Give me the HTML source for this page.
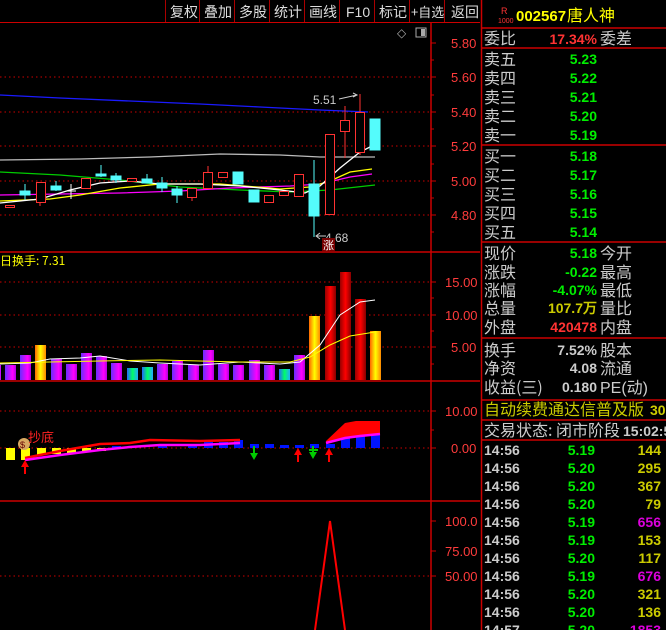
<!DOCTYPE html>
<html><head><meta charset="utf-8"><style>
html,body{margin:0;padding:0;background:#000;width:666px;height:630px;overflow:hidden}
svg{display:block}
.c{font-family:"WenQuanYi Zen Hei","Noto Sans CJK SC",sans-serif}
.n{font-family:"Liberation Sans",sans-serif;font-weight:bold}
</style></head><body>
<svg width="666" height="630" viewBox="0 0 666 630" xmlns="http://www.w3.org/2000/svg">
<defs>
<linearGradient id="pu" x1="0" x2="1"><stop offset="0" stop-color="#6a2cff"/><stop offset=".7" stop-color="#f0f"/><stop offset="1" stop-color="#b000e0"/></linearGradient>
<linearGradient id="rd" x1="0" x2="1"><stop offset="0" stop-color="#900"/><stop offset=".5" stop-color="#f00"/><stop offset="1" stop-color="#800"/></linearGradient>
<linearGradient id="ye" x1="0" x2="1"><stop offset="0" stop-color="#f60"/><stop offset=".5" stop-color="#ff0"/><stop offset="1" stop-color="#f80"/></linearGradient>
<linearGradient id="cy" x1="0" x2="1"><stop offset="0" stop-color="#26f"/><stop offset=".5" stop-color="#0f6"/><stop offset="1" stop-color="#2af"/></linearGradient>
</defs>
<!-- toolbar -->
<g class="c" fill="#ddd" font-size="14">
<text x="170" y="17">复权</text><text x="204" y="17">叠加</text><text x="239" y="17">多股</text><text x="274" y="17">统计</text><text x="309" y="17">画线</text><text x="346" y="17" font-family="Liberation Sans">F10</text><text x="379" y="17">标记</text><text x="411" y="17" font-size="13">+自选</text><text x="451" y="17">返回</text>
</g>
<g stroke="#a00" stroke-width="1">
<line x1="165.5" y1="0" x2="165.5" y2="22"/><line x1="199.5" y1="0" x2="199.5" y2="22"/><line x1="234.5" y1="0" x2="234.5" y2="22"/><line x1="269.5" y1="0" x2="269.5" y2="22"/><line x1="304.5" y1="0" x2="304.5" y2="22"/><line x1="339.5" y1="0" x2="339.5" y2="22"/><line x1="374.5" y1="0" x2="374.5" y2="22"/><line x1="409.5" y1="0" x2="409.5" y2="22"/><line x1="444.5" y1="0" x2="444.5" y2="22"/>
</g>
<line x1="0" y1="22.5" x2="480" y2="22.5" stroke="#c00"/>
<!-- frame -->
<g stroke="#c00" stroke-width="1.5">
<line x1="431" y1="22" x2="431" y2="630"/>
<line x1="0" y1="252" x2="480" y2="252"/>
<line x1="0" y1="381" x2="480" y2="381"/>
<line x1="0" y1="501" x2="480" y2="501"/>
<line x1="481.5" y1="0" x2="481.5" y2="630"/>
</g>
<!-- grids -->
<g stroke="#c00" stroke-dasharray="1.5,3" stroke-width="1">
<line x1="0" y1="77" x2="430" y2="77"/><line x1="0" y1="112" x2="430" y2="112"/><line x1="0" y1="146" x2="430" y2="146"/><line x1="0" y1="181" x2="430" y2="181"/><line x1="0" y1="215" x2="430" y2="215"/>
<line x1="0" y1="282" x2="430" y2="282"/><line x1="0" y1="315" x2="430" y2="315"/><line x1="0" y1="347" x2="430" y2="347"/>
<line x1="0" y1="411" x2="430" y2="411"/><line x1="0" y1="448" x2="430" y2="448"/>
<line x1="0" y1="576" x2="430" y2="576"/>
</g>
<!-- ticks -->
<g stroke="#c00">
<path d="M431 43h5M431 60h3M431 77h5M431 95h3M431 112h5M431 129h3M431 146h5M431 164h3M431 181h5M431 198h3M431 215h5M431 232h3M431 282h5M431 298h3M431 315h5M431 331h3M431 347h5M431 364h3M431 411h5M431 430h3M431 448h5M431 521h5M431 551h5M431 576h5"/>
</g>
<g fill="#ff3c3c" font-size="13" font-family="Liberation Sans">
<text x="451" y="48">5.80</text><text x="451" y="82">5.60</text><text x="451" y="117">5.40</text><text x="451" y="151">5.20</text><text x="451" y="186">5.00</text><text x="451" y="220">4.80</text>
<text x="445" y="287">15.00</text><text x="445" y="320">10.00</text><text x="451" y="352">5.00</text>
<text x="445" y="416">10.00</text><text x="451" y="453">0.00</text>
<text x="445" y="526">100.0</text><text x="445" y="556">75.00</text><text x="445" y="581">50.00</text>
</g>
<text x="397" y="37" fill="#aaa" font-size="12">◇</text>
<rect x="416" y="28" width="10" height="9" fill="none" stroke="#aaa"/><rect x="421" y="29" width="4" height="7" fill="#aaa"/>
<!-- MAs -->
<g fill="none" stroke-width="1.3">
<polyline stroke="#1a1aff" points="0,95 60,98 130,101 200,104 260,107 320,110 368,112"/>
<polyline stroke="#bbb" points="0,160 80,159 150,157 220,154 280,155 320,157 375,157"/>
<polyline stroke="#0c0" points="0,172 60,175 120,180 180,187 240,190 290,192 330,190 375,185"/>
<polyline stroke="#f0f" points="0,195 60,194 120,193 180,191 230,188 290,186 320,184 350,177 372,174"/>
<polyline stroke="#ff0" points="0,201 50,199 80,195 120,188 160,184 220,184 280,189 310,187 330,181 350,172 372,169"/>
<polyline stroke="#fff" points="0,203 40,199 70,190 100,183 130,181 160,184 200,184 240,186 280,190 305,193 320,186 340,168 360,152 372,146"/>
</g>
<!-- candles -->
<g stroke="#54fcfc" fill="#54fcfc">
<line x1="25" y1="184" x2="25" y2="200"/><rect x="20" y="191" width="10" height="4"/>
<line x1="56" y1="181" x2="56" y2="191"/><rect x="51" y="186" width="10" height="4"/>
<line x1="101" y1="165" x2="101" y2="177"/><rect x="96" y="174" width="10" height="2"/>
<line x1="116" y1="173" x2="116" y2="183"/><rect x="111" y="176" width="10" height="4"/>
<line x1="147" y1="174" x2="147" y2="183"/><rect x="142" y="179" width="10" height="4"/>
<line x1="162" y1="177" x2="162" y2="192"/><rect x="157" y="183" width="10" height="5"/>
<line x1="177" y1="186" x2="177" y2="203"/><rect x="172" y="189" width="10" height="6"/>
<rect x="233" y="172" width="10" height="12"/>
<rect x="249" y="190" width="10" height="12"/>
<line x1="314" y1="160" x2="314" y2="237"/><rect x="309" y="184" width="10" height="32"/>
<rect x="370" y="119" width="10" height="31"/>
</g>
<g stroke="#fff"><line x1="66" y1="191" x2="76" y2="191"/><line x1="71" y1="184" x2="71" y2="199"/></g>
<g stroke="#ff3232" fill="#000" stroke-width="1">
<rect x="5.5" y="205.5" width="9" height="2"/>
<line x1="40" y1="203" x2="40" y2="206"/><rect x="36.5" y="182.5" width="9" height="20"/>
<rect x="81.5" y="178.5" width="9" height="10"/>
<rect x="127.5" y="178.5" width="9" height="3"/>
<line x1="192" y1="197" x2="192" y2="201"/><rect x="187.5" y="188.5" width="9" height="9"/>
<line x1="208" y1="166" x2="208" y2="172"/><rect x="203.5" y="172.5" width="9" height="16"/>
<rect x="218.5" y="172.5" width="9" height="5"/>
<rect x="264.5" y="195.5" width="9" height="7"/>
<rect x="279.5" y="191.5" width="9" height="4"/>
<rect x="294.5" y="174.5" width="9" height="22"/>
<rect x="325.5" y="134.5" width="9" height="80"/>
<line x1="345" y1="106" x2="345" y2="158"/><rect x="340.5" y="120.5" width="9" height="11"/>
<line x1="360" y1="94" x2="360" y2="155"/><rect x="355.5" y="112.5" width="9" height="40"/>
</g>
<text x="313" y="104" fill="#ccc" font-size="12" font-family="Liberation Sans">5.51</text>
<path d="M339 99l18-4m-4-2l4 2-4 2" stroke="#ccc" fill="none"/>
<text x="325" y="242" fill="#ccc" font-size="12" font-family="Liberation Sans">4.68</text>
<path d="M316 236h10m-6-3l-4 3 4 3" stroke="#ccc" fill="none"/>
<rect x="322" y="238" width="13" height="13" fill="#700"/><text x="323" y="249" fill="#fff" font-size="11" class="c">涨</text>
<!-- volume -->
<text x="0" y="265" fill="#ff0" font-size="12" class="c">日换手: 7.31</text>
<g>
<rect x="0" y="365" width="1" height="15" fill="url(#pu)"/>
<rect x="5" y="365" width="11" height="15" fill="url(#pu)"/>
<rect x="20" y="355" width="11" height="25" fill="url(#pu)"/>
<rect x="35" y="345" width="11" height="35" fill="url(#ye)"/>
<rect x="51" y="359" width="11" height="21" fill="url(#pu)"/>
<rect x="66" y="364" width="11" height="16" fill="url(#pu)"/>
<rect x="81" y="353" width="11" height="27" fill="url(#pu)"/>
<rect x="96" y="356" width="11" height="24" fill="url(#pu)"/>
<rect x="111" y="363" width="11" height="17" fill="url(#pu)"/>
<rect x="127" y="368" width="11" height="12" fill="url(#cy)"/>
<rect x="142" y="367" width="11" height="13" fill="url(#cy)"/>
<rect x="157" y="364" width="11" height="16" fill="url(#pu)"/>
<rect x="172" y="361" width="11" height="19" fill="url(#pu)"/>
<rect x="188" y="365" width="11" height="15" fill="url(#pu)"/>
<rect x="203" y="350" width="11" height="30" fill="url(#pu)"/>
<rect x="218" y="364" width="11" height="16" fill="url(#pu)"/>
<rect x="233" y="365" width="11" height="15" fill="url(#pu)"/>
<rect x="249" y="360" width="11" height="20" fill="url(#pu)"/>
<rect x="264" y="365" width="11" height="15" fill="url(#pu)"/>
<rect x="279" y="369" width="11" height="11" fill="url(#cy)"/>
<rect x="294" y="355" width="11" height="25" fill="url(#pu)"/>
<rect x="309" y="316" width="11" height="64" fill="url(#ye)"/>
<rect x="325" y="286" width="11" height="94" fill="url(#rd)"/>
<rect x="340" y="272" width="11" height="108" fill="url(#rd)"/>
<rect x="355" y="299" width="11" height="81" fill="url(#rd)"/>
<rect x="370" y="331" width="11" height="49" fill="url(#ye)"/>
</g>
<g fill="none" stroke-width="1">
<polyline stroke="#fff" points="0,364 30,363 50,359 80,358 100,356 130,361 160,363 200,365 240,362 280,364 300,362 320,345 340,315 360,302 375,300"/>
<polyline stroke="#ff0" points="0,363 50,362 100,361 160,360 200,361 240,362 290,362 310,357 330,345 350,336 375,332"/>
</g>
<!-- indicator -->
<g fill="#ff0">
<rect x="6" y="448" width="9" height="12"/><rect x="21" y="448" width="9" height="12"/>
<rect x="37" y="448" width="9" height="7"/><rect x="52" y="448" width="9" height="6"/><rect x="67" y="448" width="9" height="5"/><rect x="82" y="448" width="9" height="4"/><rect x="97" y="448" width="9" height="3"/>
</g>
<g fill="#0014ff">
<rect x="112" y="446" width="9" height="2"/><rect x="158" y="444" width="9" height="4"/><rect x="188" y="444" width="9" height="4"/><rect x="204" y="442" width="9" height="6"/><rect x="219" y="442" width="9" height="6"/><rect x="234" y="440" width="9" height="8"/>
<rect x="250" y="444" width="9" height="4"/><rect x="265" y="444" width="9" height="4"/><rect x="280" y="445" width="9" height="3"/><rect x="295" y="445" width="9" height="3"/><rect x="310" y="444" width="9" height="4"/>
<rect x="326" y="444" width="9" height="4"/><rect x="341" y="438" width="9" height="10"/><rect x="356" y="434" width="9" height="14"/><rect x="371" y="435" width="9" height="13"/>
</g>
<path d="M326 441 L345 423 L356 421 L380 421 L380 435 L356 437 L326 443Z" fill="#f00"/>
<g fill="none" stroke-width="2.5">
<polyline stroke="#f00" points="25,458 60,451 100,444 130,443 150,440 200,441 240,440"/>
<polyline stroke="#f0f" points="25,460 60,455 100,450 130,447 160,445 200,445 240,443"/>
<polyline stroke="#f0f" points="326,443 345,438 360,436 380,434"/>
</g>
<circle cx="24" cy="444" r="6" fill="#d8a860"/><text x="20" y="448" font-size="9" fill="#600" font-family="Liberation Sans">$</text>
<text x="28" y="442" fill="#f22" font-size="13" class="c">抄底</text>
<g fill="#f00"><path d="M21 467l4-7 4 7h-3v7h-2v-7z"/><path d="M294 455l4-7 4 7h-3v7h-2v-7z"/><path d="M325 455l4-7 4 7h-3v7h-2v-7z"/></g>
<g fill="#0c0"><path d="M250 453l4 7 4-7h-3v-7h-2v7z"/><path d="M309 452l4 7 4-7h-3v-6h-2v6z"/><rect x="309" y="449" width="9" height="2"/></g>
<!-- bottom -->
<polyline points="315,630 330,521 345,630" fill="none" stroke="#f00" stroke-width="2"/>
<!-- right panel -->
<g stroke="#c00" stroke-width="1.5">
<line x1="481" y1="28" x2="666" y2="28"/><line x1="481" y1="48" x2="666" y2="48"/><line x1="481" y1="145" x2="666" y2="145"/><line x1="481" y1="242" x2="666" y2="242"/><line x1="481" y1="338" x2="666" y2="338"/><line x1="481" y1="400" x2="666" y2="400"/><line x1="481" y1="420" x2="666" y2="420"/><line x1="481" y1="440" x2="666" y2="440"/>
</g>
<text x="501" y="14" fill="#f33" font-size="9" font-family="Liberation Sans">R</text>
<text x="498" y="23" fill="#f33" font-size="7" font-family="Liberation Sans">1000</text>
<text x="516" y="21" fill="#ff0" font-size="15" class="n">002567</text>
<text x="567" y="21" fill="#ff0" font-size="16" class="c">唐人神</text>
<g class="c" fill="#ccc" font-size="16">
<text x="484" y="44">委比</text><text x="600" y="44">委差</text>
<text x="484" y="65">卖五</text><text x="484" y="84">卖四</text><text x="484" y="103">卖三</text><text x="484" y="122">卖二</text><text x="484" y="141">卖一</text>
<text x="484" y="162">买一</text><text x="484" y="181">买二</text><text x="484" y="200">买三</text><text x="484" y="219">买四</text><text x="484" y="238">买五</text>
<text x="484" y="259">现价</text><text x="600" y="259">今开</text>
<text x="484" y="278">涨跌</text><text x="600" y="278">最高</text>
<text x="484" y="296">涨幅</text><text x="600" y="296">最低</text>
<text x="484" y="314">总量</text><text x="600" y="314">量比</text>
<text x="484" y="333">外盘</text><text x="600" y="333">内盘</text>
<text x="484" y="356">换手</text><text x="600" y="356">股本</text>
<text x="484" y="374">净资</text><text x="600" y="374">流通</text>
<text x="484" y="393">收益(三)</text><text x="600" y="393" font-family="Liberation Sans">PE(动)</text>
<text x="484" y="415" fill="#cc0">自动续费通达信普及版</text>
<text x="484" y="436">交易状态: 闭市阶段</text>
</g>
<g class="n" font-size="14" text-anchor="end">
<text x="597" y="44" fill="#f33">17.34%</text>
<g fill="#0e0"><text x="597" y="64">5.23</text><text x="597" y="83">5.22</text><text x="597" y="102">5.21</text><text x="597" y="121">5.20</text><text x="597" y="140">5.19</text>
<text x="597" y="161">5.18</text><text x="597" y="180">5.17</text><text x="597" y="199">5.16</text><text x="597" y="218">5.15</text><text x="597" y="237">5.14</text>
<text x="597" y="258">5.18</text><text x="597" y="277">-0.22</text><text x="597" y="295">-4.07%</text></g>
<text x="597" y="313" fill="#cc0">107.7万</text>
<text x="597" y="332" fill="#f33">420478</text>
<g fill="#ccc"><text x="597" y="355">7.52%</text><text x="597" y="373">4.08</text><text x="597" y="392">0.180</text></g>
</g>
<text x="650" y="415" fill="#cc0" font-size="14" class="n">30</text>
<text x="623" y="436" fill="#ccc" font-size="14" class="n">15:02:5</text>
<g class="n" font-size="14">
<g fill="#ccc"><text x="484" y="455">14:56</text><text x="484" y="473">14:56</text><text x="484" y="491">14:56</text><text x="484" y="509">14:56</text><text x="484" y="527">14:56</text><text x="484" y="545">14:56</text><text x="484" y="563">14:56</text><text x="484" y="581">14:56</text><text x="484" y="599">14:56</text><text x="484" y="617">14:56</text><text x="484" y="635">14:57</text></g>
<g fill="#0e0" text-anchor="end"><text x="595" y="455">5.19</text><text x="595" y="473">5.20</text><text x="595" y="491">5.20</text><text x="595" y="509">5.20</text><text x="595" y="527">5.19</text><text x="595" y="545">5.19</text><text x="595" y="563">5.20</text><text x="595" y="581">5.19</text><text x="595" y="599">5.20</text><text x="595" y="617">5.20</text><text x="595" y="635">5.20</text></g>
<g fill="#cc0" text-anchor="end"><text x="661" y="455">144</text><text x="661" y="473">295</text><text x="661" y="491">367</text><text x="661" y="509">79</text><text x="661" y="527" fill="#d0d">656</text><text x="661" y="545">153</text><text x="661" y="563">117</text><text x="661" y="581" fill="#d0d">676</text><text x="661" y="599">321</text><text x="661" y="617">136</text><text x="661" y="635" fill="#d0d">1853</text></g>
</g>
</svg>
</body></html>
